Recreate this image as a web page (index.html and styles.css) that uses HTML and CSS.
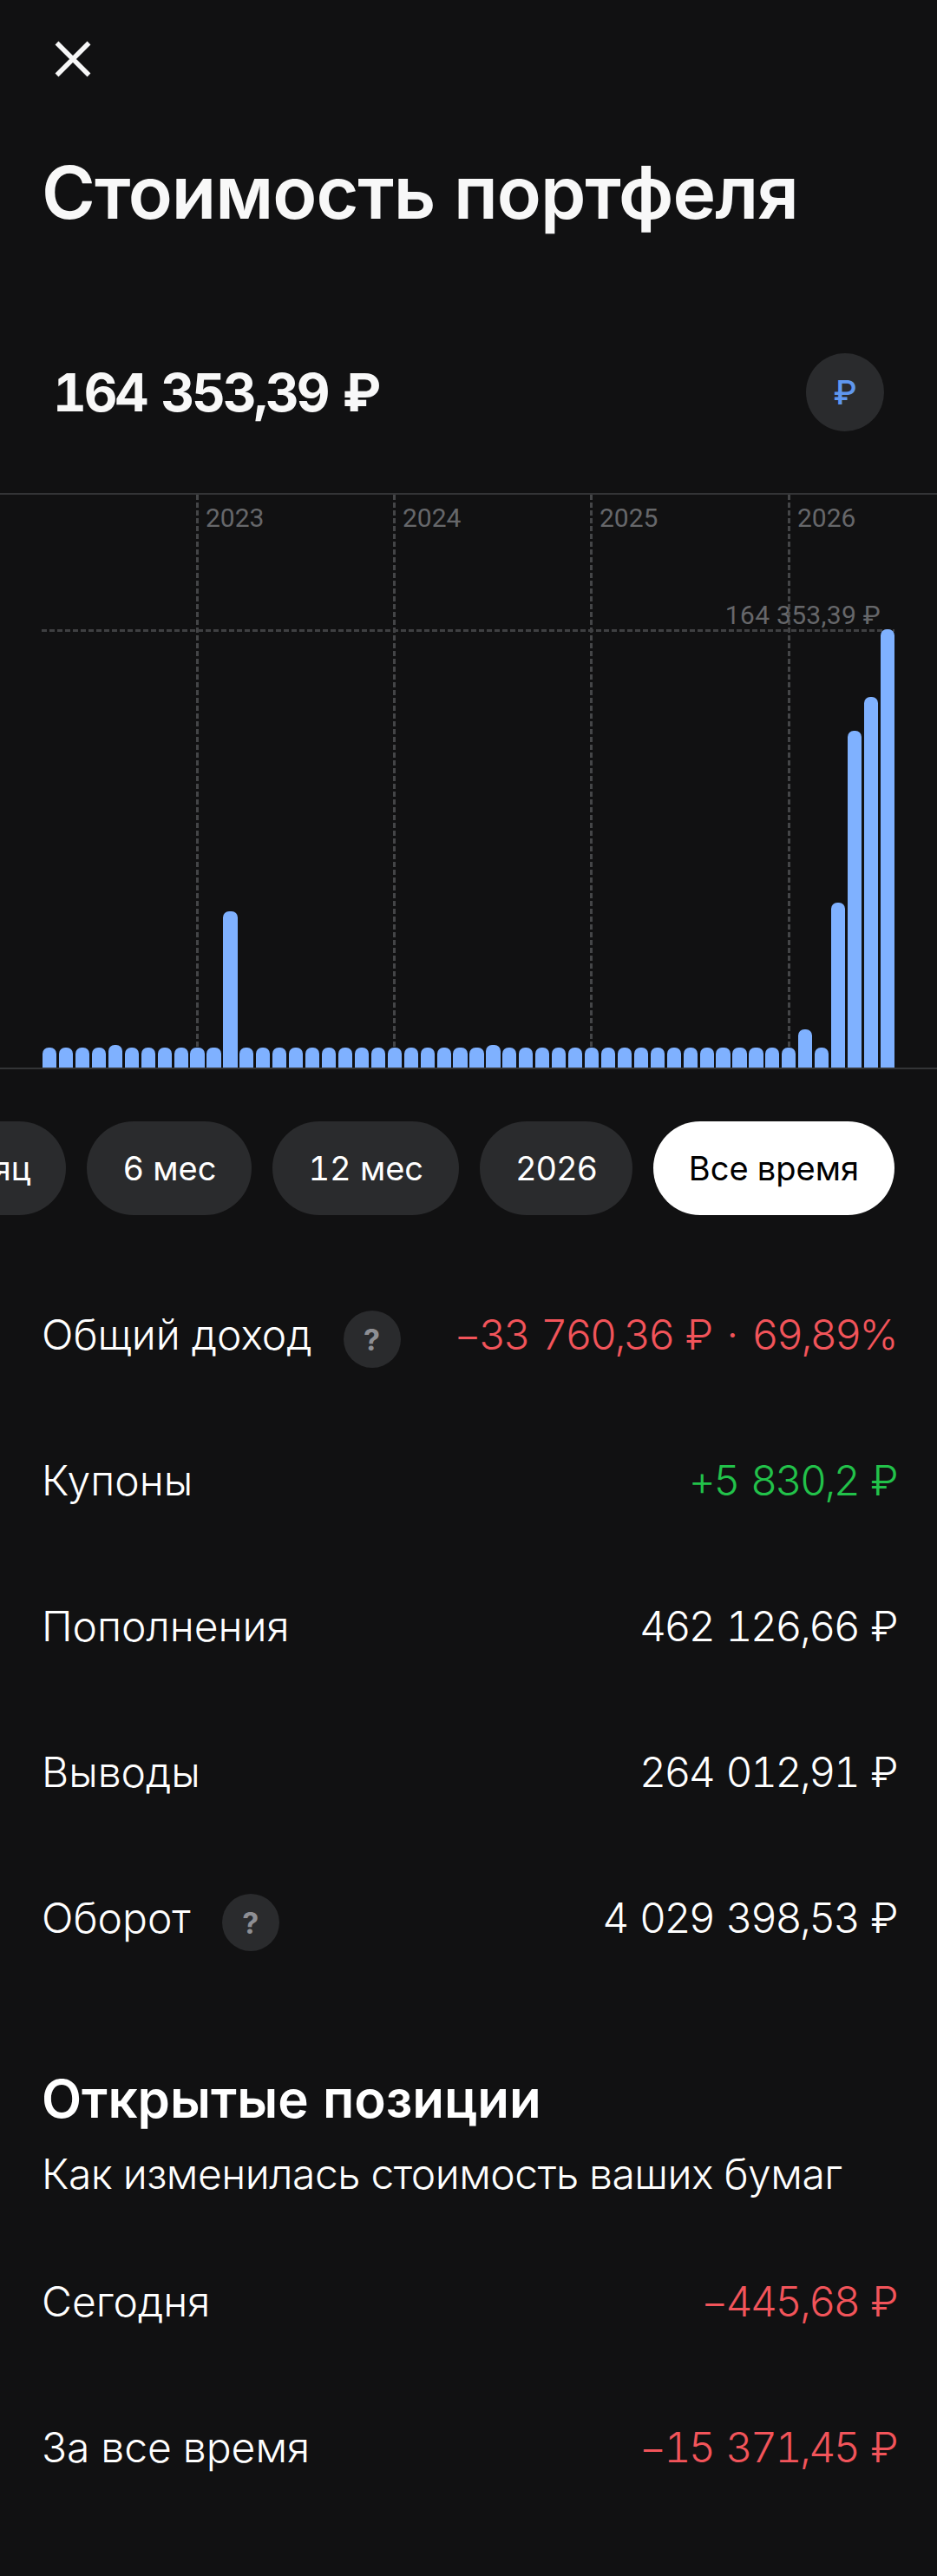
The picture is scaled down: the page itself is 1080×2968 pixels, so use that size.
FILE: index.html
```html
<!DOCTYPE html>
<html>
<head>
    <title>Стоимость портфеля</title>
    <link rel="stylesheet" href="styles.css">
</head>
<body>
    <div class="screen">
        <div class="topbar">
            <svg class="close-icon" width="42" height="42" viewBox="0 0 42 42">
                <path d="M2.5 2.5 L39.5 39.5 M39.5 2.5 L2.5 39.5" stroke="#f7f7f7" stroke-width="5.5" fill="none"/>
            </svg>
        </div>

        <h1 class="title">Стоимость портфеля</h1>

        <div class="balance">
            <span class="balance-value">164 353,39 ₽</span>
            <span class="currency-btn">₽</span>
        </div>

        <div class="chart">
            <div class="grid-v year-2023"><span class="year">2023</span></div>
            <div class="grid-v year-2024"><span class="year">2024</span></div>
            <div class="grid-v year-2025"><span class="year">2025</span></div>
            <div class="grid-v year-2026"><span class="year">2026</span></div>
            <div class="grid-h"></div>
            <span class="max-label">164 353,39 ₽</span>
            <div class="bars">
                <i></i><i></i><i></i><i></i><i style="height:26px"></i><i></i><i></i><i></i><i></i><i></i><i></i>
                <i style="height:180px"></i>
                <i></i><i></i><i></i><i></i><i></i><i></i><i></i><i></i><i></i><i></i><i></i><i></i><i></i><i></i><i></i>
                <i style="height:26px"></i>
                <i></i><i></i><i></i><i></i><i></i><i></i><i></i><i></i><i></i><i></i><i></i><i></i><i></i><i></i><i></i><i></i><i></i><i></i>
                <i style="height:44px"></i>
                <i></i>
                <i style="height:190px"></i>
                <i style="height:388px"></i>
                <i style="height:427px"></i>
                <i style="height:505px"></i>
            </div>
        </div>

        <div class="periods">
            <span class="pill">1 месяц</span>
            <span class="pill">6 мес</span>
            <span class="pill">12 мес</span>
            <span class="pill pill-year">2026</span>
            <span class="pill active">Все время</span>
        </div>

        <div class="rows rows-total">
            <div class="row">
                <span class="row-label">Общий доход <span class="help">?</span></span>
                <span class="value negative">−33 760,36 ₽<span class="dot">·</span>69,89%</span>
            </div>
            <div class="row">
                <span class="row-label">Купоны</span>
                <span class="value positive">+5 830,2 ₽</span>
            </div>
            <div class="row">
                <span class="row-label">Пополнения</span>
                <span class="value">462 126,66 ₽</span>
            </div>
            <div class="row">
                <span class="row-label">Выводы</span>
                <span class="value">264 012,91 ₽</span>
            </div>
            <div class="row">
                <span class="row-label">Оборот <span class="help">?</span></span>
                <span class="value">4 029 398,53 ₽</span>
            </div>
        </div>

        <h2 class="section-title">Открытые позиции</h2>
        <p class="section-sub">Как изменилась стоимость ваших бумаг</p>

        <div class="rows rows-open">
            <div class="row">
                <span class="row-label">Сегодня</span>
                <span class="value negative">−445,68 ₽</span>
            </div>
            <div class="row">
                <span class="row-label">За все время</span>
                <span class="value negative">−15 371,45 ₽</span>
            </div>
        </div>
    </div>
</body>
</html>
```

FILE: styles.css
```css
* {
    box-sizing: border-box;
}

body {
    margin: 0;
    background-color: #111112;
    color: #fff;
    font-family: Inter, "Noto Sans", sans-serif;
    font-variant-numeric: tabular-nums;
}

.screen {
    width: 1080px;
    height: 2968px;
    overflow: hidden;
}

.topbar {
    padding: 47px 0 0 63px;
    height: 170px;
}

.close-icon {
    display: block;
}

.title {
    margin: 0 0 0 48px;
    font-size: 84px;
    line-height: 104px;
    font-weight: 600;
    letter-spacing: -1px;
    color: #f8f8f8;
}

.balance {
    display: flex;
    justify-content: space-between;
    align-items: center;
    margin-top: 133px;
    padding: 0 61px 0 61px;
}

.balance-value {
    font-size: 60px;
    font-weight: 700;
    letter-spacing: -3px;
    word-spacing: 4px;
    color: #f8f8f8;
}

.currency-btn {
    width: 90px;
    height: 90px;
    border-radius: 50%;
    background-color: #2a2b2d;
    color: #5f97ee;
    font-size: 38px;
    font-weight: 500;
    display: flex;
    align-items: center;
    justify-content: center;
}

.chart {
    position: relative;
    margin-top: 71px;
    height: 664px;
    border-top: 2px solid #333436;
    border-bottom: 2px solid #333436;
    font-family: Roboto, sans-serif;
    font-size: 30px;
    color: #66676a;
}

.grid-v {
    position: absolute;
    top: 0;
    bottom: 0;
    width: 3px;
    background: repeating-linear-gradient(to bottom, #444547 0 6px, transparent 6px 9px);
}

.year-2023 { left: 226px; }
.year-2024 { left: 453px; }
.year-2025 { left: 680px; }
.year-2026 { left: 908px; }

.year {
    position: absolute;
    left: 11px;
    top: 10px;
    line-height: 34px;
}

.grid-h {
    position: absolute;
    left: 48px;
    width: 983px;
    top: 155px;
    height: 3px;
    background: repeating-linear-gradient(to right, #3f4042 0 6px, transparent 6px 9px);
}

.max-label {
    position: absolute;
    right: 65px;
    top: 122px;
    line-height: 34px;
    letter-spacing: 0.3px;
}

.bars {
    position: absolute;
    left: 49px;
    bottom: 0;
    display: flex;
    align-items: flex-end;
    gap: 2.75px;
}

.bars i {
    display: block;
    width: 16.2px;
    height: 23px;
    background-color: #7fb1ff;
    border-radius: 7px 7px 0 0;
}

.periods {
    display: flex;
    justify-content: flex-end;
    gap: 24px;
    margin-top: 60px;
    padding-right: 49px;
}

.pill {
    flex-shrink: 0;
    height: 108px;
    padding: 0 41px;
    border-radius: 54px;
    background-color: #2a2b2d;
    font-size: 38px;
    display: flex;
    align-items: center;
}

.pill-year {
    letter-spacing: -1.2px;
}

.pill.active {
    background-color: #fff;
    color: #000;
}

.rows {
    padding: 0 47px 0 48px;
    font-size: 48px;
    font-weight: 300;
}

.rows-total {
    margin-top: 53px;
}

.rows-open {
    margin-top: 32px;
}

.row {
    display: flex;
    justify-content: space-between;
    align-items: center;
    height: 168px;
}

.row-label {
    display: flex;
    align-items: center;
    gap: 36px;
}

.value {
    letter-spacing: -2.6px;
    word-spacing: 4px;
}

.dot {
    margin: 0 18px;
}

.help {
    width: 66px;
    height: 66px;
    margin-top: 12px;
    border-radius: 50%;
    background-color: #2a2b2d;
    color: #8e8f94;
    font-size: 34px;
    font-weight: 700;
    letter-spacing: 0;
    display: flex;
    align-items: center;
    justify-content: center;
}

.negative {
    color: #f2545a;
}

.positive {
    color: #22c24a;
}

.section-title {
    margin: 87px 0 0 48px;
    font-size: 60px;
    line-height: 76px;
    font-weight: 600;
}

.section-sub {
    margin: 19px 0 0 48px;
    font-size: 48px;
    line-height: 60px;
    font-weight: 300;
    letter-spacing: -0.5px;
}
```
